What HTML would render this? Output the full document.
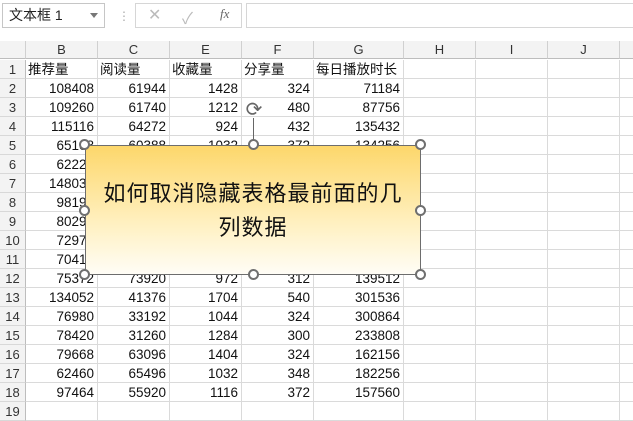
<!DOCTYPE html>
<html><head><meta charset="utf-8"><style>
*{margin:0;padding:0;box-sizing:border-box}
body{width:633px;height:406px;overflow:hidden;background:#fff;font-family:"Liberation Sans","Noto Sans CJK SC",sans-serif;position:relative}
.top{position:absolute;left:0;top:0;width:633px;height:40px;background:#fff}
.nb{position:absolute;left:2px;top:3px;width:103px;height:25px;border:1px solid #c6c6c6;font-size:14px;line-height:23px;padding-left:6px;color:#222}
.nb .ar{position:absolute;right:6px;top:9px;border:4px solid transparent;border-top:5px solid #777}
.fx{position:absolute;left:135px;top:3px;width:107px;height:25px;border:1px solid #d6d6d6}
.fi{position:absolute;left:246px;top:3px;width:390px;height:25px;border:1px solid #d6d6d6}
.hdr{position:absolute;top:41px;height:18px;background:#f3f3f3;border-bottom:1px solid #bdbdbd;border-right:1px solid #d0d0d0;font-size:13px;text-align:center;line-height:18px;color:#333}
.rh{position:absolute;left:0;width:26px;height:19px;background:#f3f3f3;border-right:1px solid #bdbdbd;border-bottom:1px solid #d8d8d8;font-size:13px;text-align:center;line-height:19px;color:#333}
.c{position:absolute;height:19px;border-right:1px solid #dadada;border-bottom:1px solid #dadada;font-size:13.5px;line-height:19px;text-align:right;padding-right:3px;color:#111;white-space:nowrap;overflow:hidden}
.l{text-align:left;padding-left:2px}
.box{position:absolute;left:85px;top:145px;width:336px;height:130px;border:1.5px solid #6d6d6d;background:linear-gradient(#fdd76b,#fff0c0 60%,#fffdf6);font-size:22px;letter-spacing:1px;text-align:center;padding-top:29px;line-height:34px;color:#111;padding-left:14px;padding-right:14px;font-family:"Noto Sans CJK SC",sans-serif}
.h{position:absolute;width:11px;height:11px;border:2px solid #6f6f6f;border-radius:50%;background:#fff}
</style></head><body>
<div class="top">
<div class="nb">文本框 1<span class="ar"></span></div>
<div style="position:absolute;left:118px;top:9px;color:#aaa;font-size:12px">⋮</div>
<div class="fx"><span style="position:absolute;left:12px;top:1px;color:#bbb;font-size:16px">✕</span><span style="position:absolute;left:46px;top:1px;color:#bbb;font-size:16px">✓</span><span style="position:absolute;left:84px;top:2px;color:#666;font-size:13px;font-style:italic;font-family:'Liberation Serif',serif">fx</span></div>
<div class="fi"></div>
</div>
<div id="g"></div>
<div style="position:absolute;left:253px;top:118px;width:1px;height:28px;background:#666"></div>
<div style="position:absolute;left:243px;top:99px;width:22px;height:22px;color:#666;font-size:20px;line-height:22px;text-align:center">⟳</div>
<div class="box">如何取消隐藏表格最前面的几列数据</div>
<div class="h" style="left:79px;top:139px"></div><div class="h" style="left:248px;top:139px"></div><div class="h" style="left:415px;top:139px"></div>
<div class="h" style="left:79px;top:205px"></div><div class="h" style="left:415px;top:205px"></div>
<div class="h" style="left:79px;top:269px"></div><div class="h" style="left:248px;top:269px"></div><div class="h" style="left:415px;top:269px"></div>
<script>
var cols=[["B",26,72],["C",98,72],["E",170,72],["F",242,72],["G",314,90],["H",404,72],["I",476,72],["J",548,72],["",620,20]];
var d=[["推荐量","阅读量","收藏量","分享量","每日播放时长"],
[108408,61944,1428,324,71184],[109260,61740,1212,480,87756],[115116,64272,924,432,135432],
[65108,60388,1032,372,134256],[62220,58000,1100,300,120000],[148032,60000,1000,300,120000],[98196,60000,1000,300,120000],
[80292,60000,1000,300,120000],[72972,60000,1000,300,120000],[70416,60000,1000,300,120000],[75372,73920,972,312,139512],
[134052,41376,1704,540,301536],[76980,33192,1044,324,300864],[78420,31260,1284,300,233808],[79668,63096,1404,324,162156],
[62460,65496,1032,348,182256],[97464,55920,1116,372,157560]];
var h='<div class="hdr" style="left:0;width:26px"></div>';
cols.forEach(function(c){h+='<div class="hdr" style="left:'+c[1]+'px;width:'+c[2]+'px">'+c[0]+'</div>'});
for(var r=0;r<19;r++){var y=60+r*19;h+='<div class="rh" style="top:'+y+'px">'+(r+1)+'</div>';
cols.forEach(function(c,i){var v=(d[r]&&i<5)?d[r][i]:'';h+='<div class="c'+(r==0?' l':'')+'" style="top:'+y+'px;left:'+c[1]+'px;width:'+c[2]+'px">'+v+'</div>'});}
document.getElementById('g').innerHTML=h;
</script>
</body></html>
